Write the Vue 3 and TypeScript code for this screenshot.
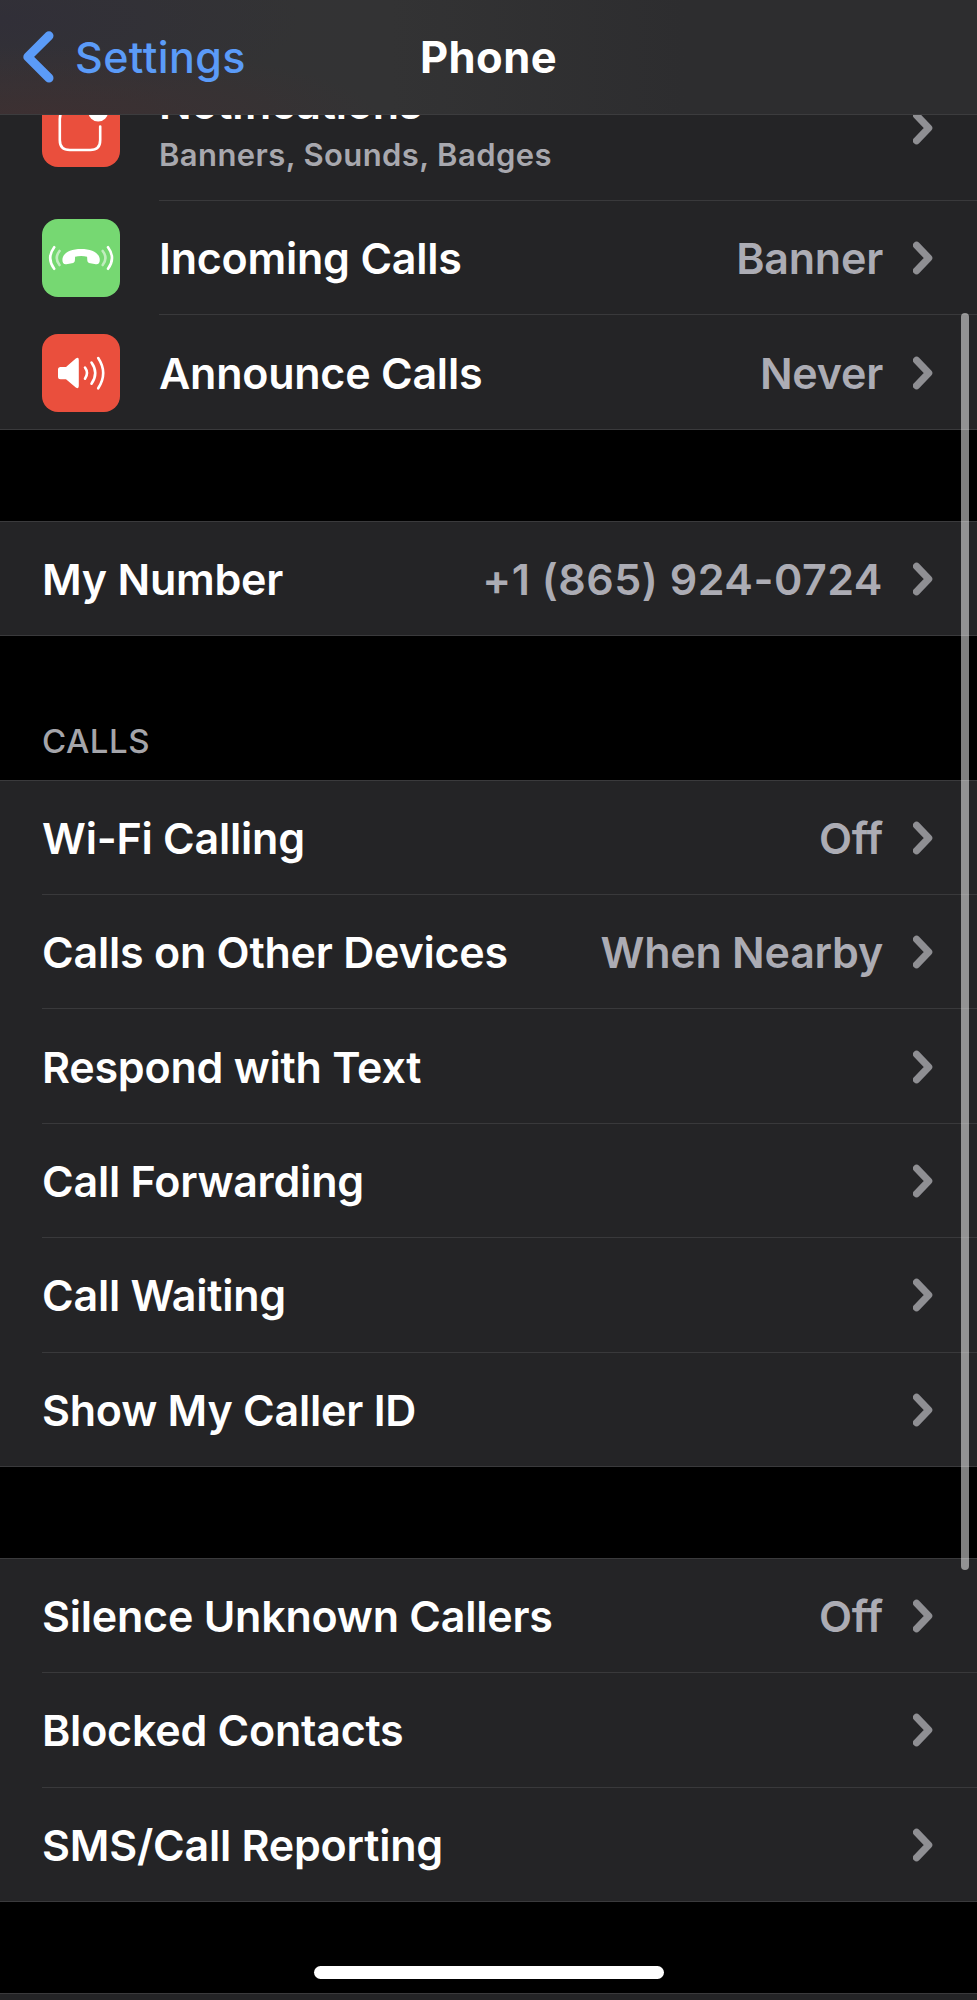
<script setup lang="ts">
interface Item {
  label: string
  value?: string
  detail?: string
  icon?: 'notifications' | 'incoming' | 'announce'
  numeric?: boolean
}
interface Group {
  id: string
  heading?: string
  items: Item[]
}

const groups: Group[] = [
  {
    id: 'alerts',
    items: [
      { label: 'Notifications', detail: 'Banners, Sounds, Badges', icon: 'notifications' },
      { label: 'Incoming Calls', value: 'Banner', icon: 'incoming' },
      { label: 'Announce Calls', value: 'Never', icon: 'announce' },
    ],
  },
  { id: 'number', items: [{ label: 'My Number', value: '+1 (865) 924-0724', numeric: true }] },
  {
    id: 'calls',
    heading: 'CALLS',
    items: [
      { label: 'Wi-Fi Calling', value: 'Off' },
      { label: 'Calls on Other Devices', value: 'When Nearby' },
      { label: 'Respond with Text' },
      { label: 'Call Forwarding' },
      { label: 'Call Waiting' },
      { label: 'Show My Caller ID' },
    ],
  },
  {
    id: 'blocking',
    items: [
      { label: 'Silence Unknown Callers', value: 'Off' },
      { label: 'Blocked Contacts' },
      { label: 'SMS/Call Reporting' },
    ],
  },
]
</script>

<template>
  <div class="screen">
    <header class="nav">
      <a class="back">
        <svg class="back-arrow" viewBox="0 0 32 52" aria-hidden="true">
          <path d="M26 4.800 4.800 25.900 26 47" />
        </svg>
        <span class="back-label">Settings</span>
      </a>
      <h1 class="title">Phone</h1>
    </header>

    <main class="content">
      <section v-for="g in groups" :key="g.id" class="section">
        <h2 v-if="g.heading" class="heading">{{ g.heading }}</h2>
        <ul class="group">
          <li v-for="item in g.items" :key="item.label" class="row" :class="{ tall: item.detail }">
            <svg v-if="item.icon" class="icon" :class="item.icon" viewBox="0 0 78 78" aria-hidden="true">
              <g v-if="item.icon === 'notifications'">
                <path class="line" d="M44 20H27.800q-10 0-10 10v21q0 10 10 10h20.400q10 0 10-10V37.500" />
                <circle cx="56.200" cy="22.700" r="9.800" />
              </g>
              <g v-else-if="item.icon === 'incoming'">
                <path d="M20.400 41c0-7 8-11 18.700-11s18.700 4 18.700 11c0 3-1.500 4.600-4 4.200l-5.500-.9c-2-.3-2.900-1.300-3-3.100l-.2-3.400c-3.500-1.100-8.500-1.100-12 0l-.2 3.400c-.1 1.800-1 2.800-3 3.100l-5.500.9c-2.500.4-4-1.200-4-4.200z" />
                <path class="line" d="M12.200 28.200q-8 10.800 0 21.600M66 28.200q8 10.800 0 21.600" />
                <path class="line faint" d="M17.500 32q-5.500 7 0 14M60.700 32q5.500 7 0 14" />
              </g>
              <g v-else>
                <path d="M18.500 33h5.500l9.800-8.500q3-1.800 3 1.500v26q0 3.300-3 1.500L24 45.300h-5.500q-2.500 0-2.500-2.500v-7.300q0-2.500 2.500-2.500z" />
                <path class="line" d="M43 33.500q4 5.500 0 11.200M49.500 28.500q7.500 10.500 0 21.200M56.200 24q10 15 0 30.300" />
              </g>
            </svg>
            <div class="body">
              <div class="texts">
                <span class="label">{{ item.label }}</span>
                <span v-if="item.detail" class="detail">{{ item.detail }}</span>
              </div>
              <span v-if="item.value" class="value" :class="{ numeric: item.numeric }">{{ item.value }}</span>
              <svg class="chevron" viewBox="0 0 20 34" aria-hidden="true">
                <path d="M3.500 4.300 15.700 17 3.500 29.700" />
              </svg>
            </div>
          </li>
        </ul>
      </section>
      <div class="next-group"></div>
    </main>

    <div class="scrollbar"></div>
    <div class="home-indicator"></div>
  </div>
</template>

<style>
body {
  background: #000;
}
</style>

<style scoped>
.screen {
  position: relative;
  width: 977px;
  height: 2000px;
  overflow: hidden;
  background: #000;
  color: #fff;
  font-family: Inter, 'Liberation Sans', sans-serif;
  font-size: 43px;
  font-weight: 560;
  letter-spacing: -0.23px;
}
.nav {
  position: absolute;
  inset: 0 0 auto;
  z-index: 2;
  box-sizing: border-box;
  height: 115px;
  display: grid;
  grid-template-columns: 1fr auto 1fr;
  align-items: center;
  padding: 0 23px;
  border-bottom: 1px solid #3c3c3e;
  background:
    radial-gradient(ellipse 340px 70px at 40px 116px, #3d3032 0%, transparent 100%),
    radial-gradient(ellipse 300px 90px at 0 20px, #312f38 0%, transparent 100%),
    linear-gradient(90deg, #333335 0%, #333334 40%, #2d2d2f 70%);
}
.back {
  display: flex;
  align-items: center;
  color: #5b9bf8;
}
.back-arrow {
  width: 32px;
  height: 52px;
  margin-right: 20px;
}
.back-arrow path,
.chevron path {
  fill: none;
  stroke: currentColor;
  stroke-linecap: round;
  stroke-linejoin: round;
}
.back-arrow path {
  stroke-width: 9px;
}
.back-label {
  font-weight: 550;
  letter-spacing: 0.4px;
}
.title {
  margin: 0;
  font-size: 43.500px;
  font-weight: 690;
  letter-spacing: 0.4px;
}
.content {
  padding-top: 53px;
}
.section {
  margin-bottom: 91px;
}
.group {
  margin: 0;
  padding: 0;
  list-style: none;
  background: #242426;
  border-bottom: 1px solid #3a3a3c;
}
.row {
  box-sizing: border-box;
  display: flex;
  height: 114.400px;
  padding-left: 42px;
}
.row:first-child {
  border-top: 1px solid #3a3a3c;
}
.row.tall {
  height: 147px;
}
.icon {
  flex: none;
  align-self: center;
  width: 78px;
  height: 78px;
  margin: 2px 39px 0 0;
  border-radius: 16px;
  background: #ea4f3d;
  fill: #fff;
}
.icon.incoming {
  background: #76d872;
}
.icon .line {
  fill: none;
  stroke: #fff;
  stroke-width: 2.600px;
  stroke-linecap: round;
}
.icon .faint {
  opacity: 0.55;
}
.body {
  flex: 1;
  display: flex;
  align-items: center;
  padding: 1px 44px 0 0;
}
.row + .row .body {
  border-top: 1px solid #39393b;
}
.texts {
  flex: 1;
  display: flex;
  flex-direction: column;
}
.tall .texts {
  gap: 7px;
  padding-bottom: 6px;
}
.label,
.value {
  white-space: nowrap;
}
.detail {
  font-size: 31px;
  letter-spacing: 0.4px;
  color: #a8a8ae;
}
.value {
  color: #acacb4;
}
.value.numeric {
  letter-spacing: 0.5px;
}
.chevron {
  width: 20px;
  height: 34px;
  margin-left: 30px;
  color: #8f8f93;
}
.chevron path {
  stroke-width: 7.200px;
}
.heading {
  margin: 0;
  padding: 0 0 23.400px 42px;
  font-size: 33px;
  line-height: 29px;
  font-weight: 550;
  letter-spacing: 0.500px;
  color: #a5a5aa;
}
.next-group {
  height: 10px;
  background: #242426;
  border-top: 1px solid #3a3a3c;
}
.scrollbar {
  position: absolute;
  top: 313px;
  left: 961px;
  width: 8px;
  height: 1257px;
  border-radius: 4px;
  background: rgba(255, 255, 255, 0.5);
}
.home-indicator {
  position: absolute;
  top: 1966px;
  left: 314px;
  width: 350px;
  height: 13px;
  border-radius: 7px;
  background: #fff;
}
</style>
